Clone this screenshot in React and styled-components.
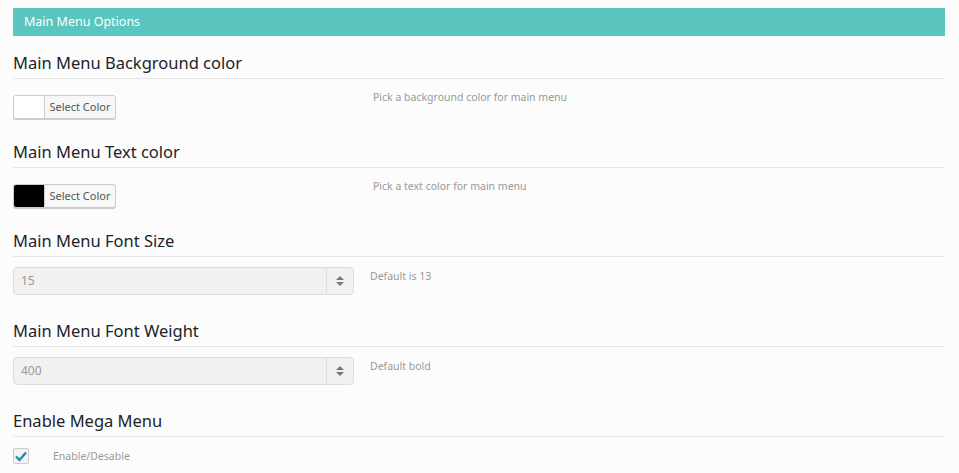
import React from "react";
import styled, { createGlobalStyle } from "styled-components";

const GlobalStyle = createGlobalStyle`
  html, body {
    margin: 0;
    padding: 0;
    background: #fcfcfc;
    font-family: "Noto Sans", "Open Sans", sans-serif;
  }
`;

const Wrapper = styled.div`
  padding: 8px 14px 0 13px;
`;

const PanelTitle = styled.div`
  height: 28px;
  background-color: #5bc5bf;
  color: #fff;
  font-size: 12.5px;
  line-height: 28px;
  padding-left: 11px;
`;

const Section = styled.div`
  padding-top: ${(p) => p.$top}px;
`;

const Heading = styled.h3`
  margin: 0;
  font-size: 16.5px;
  font-weight: 400;
  line-height: 24px;
  color: #1d2327;
  padding-bottom: 3px;
  border-bottom: 1px solid #e6e6e6;
`;

const Row = styled.div`
  display: grid;
  grid-template-columns: ${(p) => p.$left}px 1fr;
  align-items: start;
  padding-top: ${(p) => p.$top}px;
`;

const Description = styled.div`
  font-size: 10.5px;
  color: #999;
  line-height: 14px;
  margin-top: ${(p) => p.$offset}px;
`;

const ColorButton = styled.button`
  display: flex;
  align-items: stretch;
  height: 24px;
  width: 103px;
  padding: 0;
  border: 1px solid #ccc;
  border-radius: 3px;
  background: #f7f7f7;
  box-shadow: 0 1px 0 #ccc;
  overflow: hidden;
  font-family: inherit;
  cursor: pointer;
`;

const Swatch = styled.span`
  width: 30px;
  background: ${(p) => p.$color};
  border-right: 1px solid #ccc;
`;

const ButtonLabel = styled.span`
  flex: 1;
  font-size: 11px;
  line-height: 22px;
  color: #555;
  text-align: center;
`;

const SelectBox = styled.div`
  display: flex;
  height: 28px;
  width: 341px;
  box-sizing: border-box;
  border: 1px solid #ddd;
  border-radius: 4px;
  background: #f1f1f1;
`;

const SelectValue = styled.div`
  flex: 1;
  padding-left: 7px;
  font-size: 12px;
  line-height: 26px;
  color: #999;
`;

const ArrowBox = styled.div`
  width: 26px;
  border-left: 1px solid #ddd;
  display: flex;
  align-items: center;
  justify-content: center;
`;

const CheckRow = styled.div`
  display: flex;
  align-items: center;
  gap: 24px;
  padding-top: 11px;
`;

const CheckBox = styled.span`
  width: 16px;
  height: 16px;
  box-sizing: border-box;
  border: 1px solid #ccc;
  border-radius: 2px;
  background: #f3f3f3;
  display: flex;
  align-items: center;
  justify-content: center;
`;

const CheckLabel = styled.span`
  font-size: 10.5px;
  color: #999;
`;

const Arrows = () => (
  <svg width="8" height="10" viewBox="0 0 8 10">
    <path d="M4 0 L8 4 L0 4 Z" fill="#777" />
    <path d="M0 6 L8 6 L4 10 Z" fill="#777" />
  </svg>
);

const Check = () => (
  <svg width="12" height="11" viewBox="0 0 12 11">
    <path d="M1 5.5 L4.5 9 L11 1.5" stroke="#1e8cbe" strokeWidth="2.4" fill="none" />
  </svg>
);

const colorOptions = [
  { title: "Main Menu Background color", color: "#fff", help: "Pick a background color for main menu" },
  { title: "Main Menu Text color", color: "#000", help: "Pick a text color for main menu" },
];

const selectOptions = [
  { title: "Main Menu Font Size", value: "15", help: "Default is 13" },
  { title: "Main Menu Font Weight", value: "400", help: "Default bold" },
];

export default function App() {
  return (
    <Wrapper>
      <GlobalStyle />
      <PanelTitle>Main Menu Options</PanelTitle>

      {colorOptions.map((opt, i) => (
        <Section key={opt.title} $top={i === 0 ? 15 : 21}>
          <Heading>{opt.title}</Heading>
          <Row $left={360} $top={16}>
            <ColorButton>
              <Swatch $color={opt.color} />
              <ButtonLabel>Select Color</ButtonLabel>
            </ColorButton>
            <Description $offset={-5}>{opt.help}</Description>
          </Row>
        </Section>
      ))}

      {selectOptions.map((opt, i) => (
        <Section key={opt.title} $top={i === 0 ? 21 : 24}>
          <Heading>{opt.title}</Heading>
          <Row $left={357} $top={10}>
            <SelectBox>
              <SelectValue>{opt.value}</SelectValue>
              <ArrowBox>
                <Arrows />
              </ArrowBox>
            </SelectBox>
            <Description $offset={2}>{opt.help}</Description>
          </Row>
        </Section>
      ))}

      <Section $top={24}>
        <Heading>Enable Mega Menu</Heading>
        <CheckRow>
          <CheckBox>
            <Check />
          </CheckBox>
          <CheckLabel>Enable/Desable</CheckLabel>
        </CheckRow>
      </Section>
    </Wrapper>
  );
}
